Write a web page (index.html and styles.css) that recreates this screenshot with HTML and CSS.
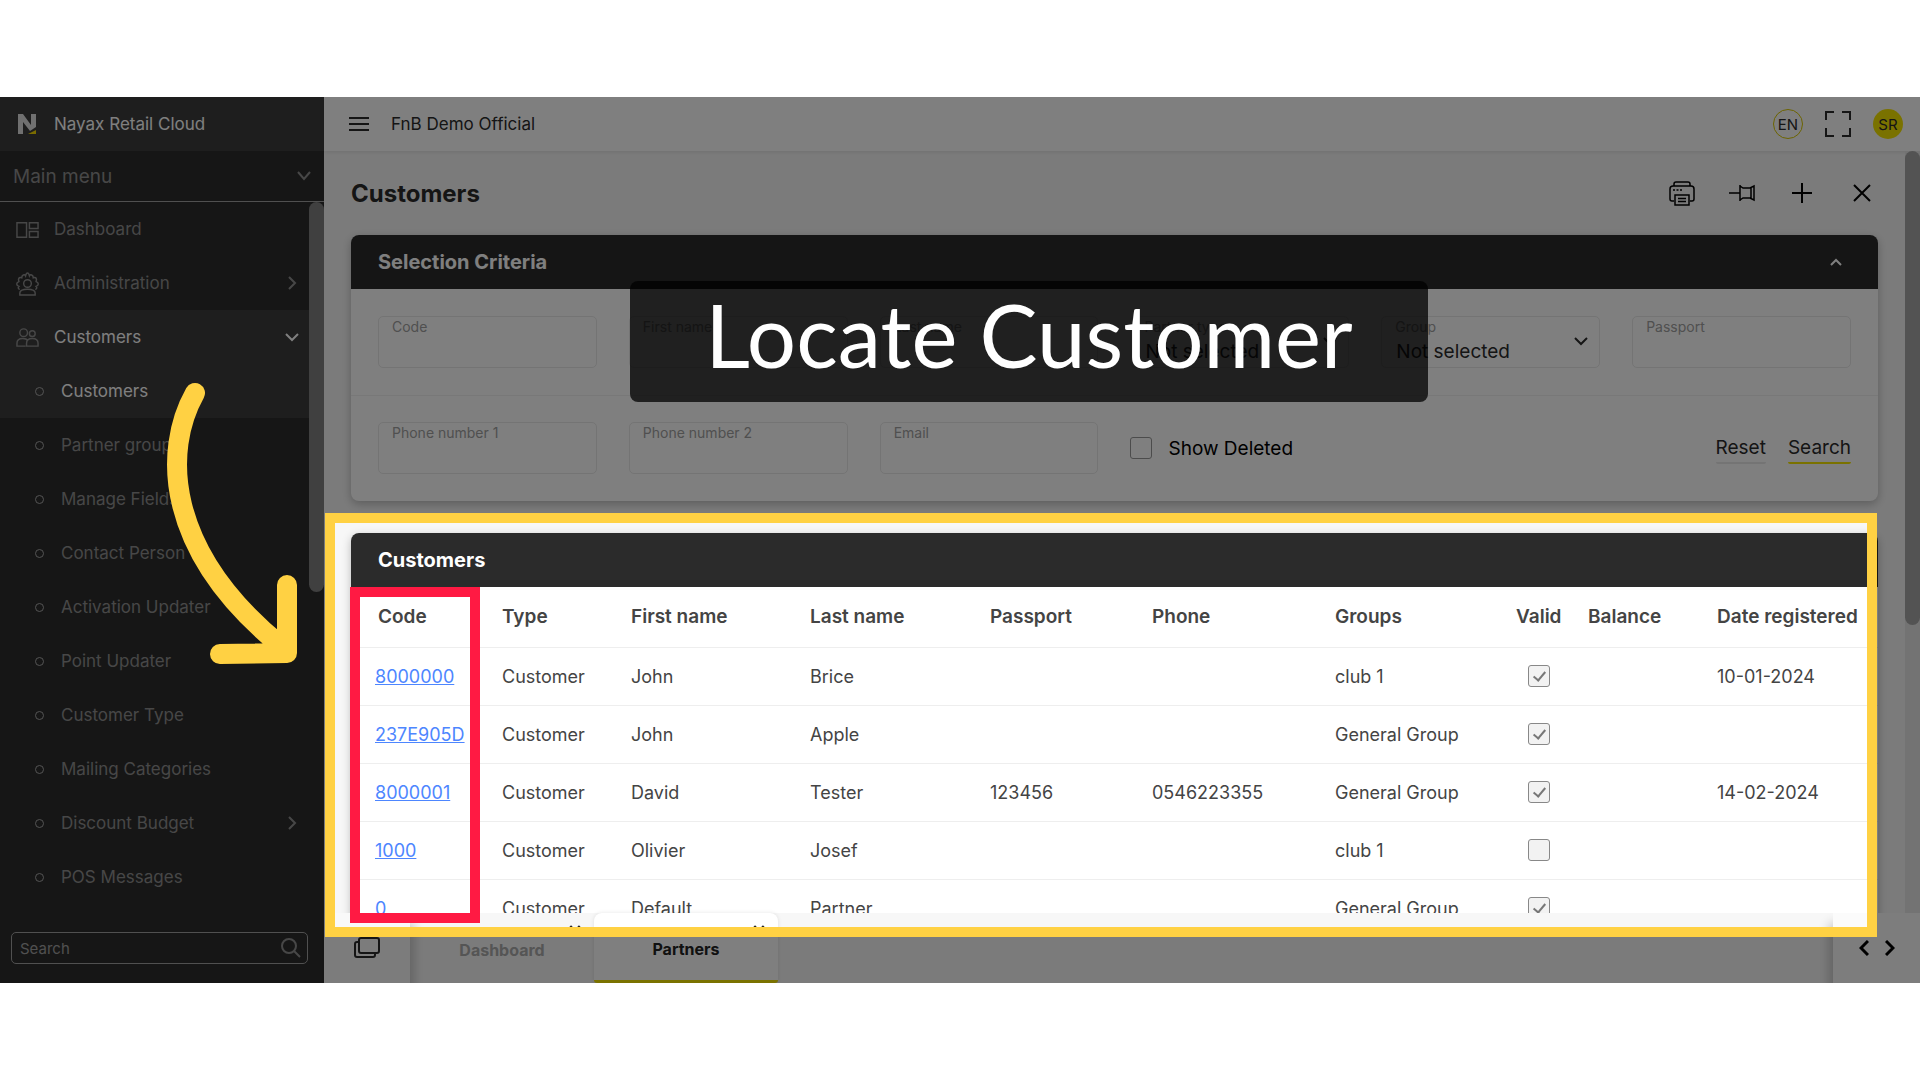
FILE: index.html
```html
<!DOCTYPE html>
<html lang="en">
<head>
    <meta charset="UTF-8">
    <meta name="viewport" content="width=device-width, initial-scale=1.0">
    <title>Customers - Nayax Retail Cloud</title>
    <link rel="stylesheet" href="styles.css">
</head>
<body>
    <div class="app">
        <!-- Sidebar -->
        <aside class="sidebar">
            <div class="brand">
                <svg class="brand-logo" viewBox="0 0 18 20"><path fill="#e0e0e0" d="M0 0h5l8 11V0h5v13l-6 4L5 8v12H0z"/><path fill="#f5d800" d="M10 20l8-4v4z"/></svg>
                <span>Nayax Retail Cloud</span>
            </div>
            <button class="menu-title" type="button">
                Main menu
                <svg class="chevron" viewBox="0 0 14 14"><path d="M1 3l6 7 6-7"/></svg>
            </button>
            <div class="menu-area">
                <nav class="menu">
                    <a href="#" class="item">
                        <svg class="item-icon" viewBox="0 0 24 24"><path d="M1 5h10v15H1zM14 5h9v6h-9zM14 14h9v6h-9z"/></svg>
                        Dashboard
                    </a>
                    <a href="#" class="item">
                        <svg class="item-icon" viewBox="0 0 24 24"><circle cx="12" cy="12" r="4"/><path d="M4 24v-2c0-3 4-4 8-4s8 1 8 4v2zM4 18c-2 0-2-2-1-3-3-1-3-4 0-5-1-3 0-5 3-4 0-3 3-4 4-2 1-4 3-4 4 0 1-2 4-1 4 2 3-1 4 1 3 4 3 1 3 4 0 5 1 1 1 3-1 3"/></svg>
                        Administration
                        <svg class="chevron" viewBox="0 0 14 14"><path d="M4 1l6 6-6 6"/></svg>
                    </a>
                    <a href="#" class="item active">
                        <svg class="item-icon" viewBox="0 0 24 24"><circle cx="8" cy="7" r="4"/><circle cx="17" cy="8" r="3"/><path d="M10 21H1v-3c0-3 2-5 6-5 2 0 4 0 5 2M11 21h12v-3c0-3-2-5-6-5s-6 2-6 5z"/></svg>
                        Customers
                        <svg class="chevron" viewBox="0 0 14 14"><path d="M1 4l6 6 6-6"/></svg>
                    </a>
                    <a href="#" class="item sub active">Customers</a>
                    <a href="#" class="item sub">Partner groups</a>
                    <a href="#" class="item sub">Manage Fields</a>
                    <a href="#" class="item sub">Contact Person</a>
                    <a href="#" class="item sub">Activation Updater</a>
                    <a href="#" class="item sub">Point Updater</a>
                    <a href="#" class="item sub">Customer Type</a>
                    <a href="#" class="item sub">Mailing Categories</a>
                    <a href="#" class="item sub">Discount Budget
                        <svg class="chevron" viewBox="0 0 14 14"><path d="M4 1l6 6-6 6"/></svg>
                    </a>
                    <a href="#" class="item sub">POS Messages</a>
                </nav>
                <div class="menu-scroll"></div>
            </div>
            <div class="menu-search">
                <label class="search-box">
                    <input type="text" placeholder="Search" aria-label="Search menu">
                    <svg viewBox="0 0 20 20"><circle cx="8" cy="8" r="7"/><path d="M13 13l6 6"/></svg>
                </label>
            </div>
        </aside>

        <div class="main">
            <!-- Top bar -->
            <header class="topbar">
                <button type="button" class="icon-button" aria-label="Toggle menu">
                    <svg class="hamburger" viewBox="0 0 20 16"><path d="M0 2h20M0 8h20M0 14h20"/></svg>
                </button>
                <span class="company">FnB Demo Official</span>
                <button type="button" class="round lang">EN</button>
                <button type="button" class="icon-button" aria-label="Full screen">
                    <svg class="fullscreen" viewBox="0 0 26 26"><path d="M1 9V1h8M17 1h8v8M25 17v8h-8M9 25H1v-8"/></svg>
                </button>
                <button type="button" class="round user">SR</button>
            </header>

            <div class="view">
                <div class="content">
                    <div class="page-head">
                        <h1>Customers</h1>
                        <div class="tools">
                            <button type="button" class="icon-button" aria-label="Print">
                                <svg viewBox="0 0 26 26"><path d="M5 6V4q0-2 2-2h12q2 0 2 2v2M5 21H3q-2 0-2-2V9q0-3 3-3h18q3 0 3 3v10q0 2-2 2h-2M6 25V15h14v10zM9 18.500h8M9 21.500h8M4 10h2M7.500 10h2M11 10h2"/></svg>
                            </button>
                            <button type="button" class="icon-button" aria-label="Pin">
                                <svg viewBox="0 0 26 26"><path d="M0 13h11M11 5v16M11 6l3 2h7l4-2v14l-4-2h-7l-3 2M22 8v10"/></svg>
                            </button>
                            <button type="button" class="icon-button" aria-label="Add">
                                <svg class="thick" viewBox="0 0 26 26"><path d="M13 3v20M3 13h20"/></svg>
                            </button>
                            <button type="button" class="icon-button" aria-label="Close">
                                <svg class="thick" viewBox="0 0 26 26"><path d="M5 5l16 16M21 5L5 21"/></svg>
                            </button>
                        </div>
                    </div>

                    <!-- Filter form -->
                    <section class="card">
                        <h2 class="card-head">Selection Criteria
                            <svg class="chevron" viewBox="0 0 14 14"><path d="M2 10l5-5 5 5"/></svg>
                        </h2>
                        <form>
                            <div class="filters">
                                <div class="field"><label for="code">Code</label><input id="code" type="text"></div>
                                <div class="field"><label for="firstName">First name</label><input id="firstName" type="text"></div>
                                <div class="field"><label for="lastName">Last name</label><input id="lastName" type="text"></div>
                                <div class="field">
                                    <label for="partnerType">Partner type</label>
                                    <select id="partnerType"><option>Not selected</option></select>
                                    <svg class="chevron" viewBox="0 0 14 14"><path d="M1 4l6 6 6-6"/></svg>
                                </div>
                                <div class="field">
                                    <label for="group">Group</label>
                                    <select id="group"><option>Not selected</option></select>
                                    <svg class="chevron" viewBox="0 0 14 14"><path d="M1 4l6 6 6-6"/></svg>
                                </div>
                                <div class="field"><label for="passport">Passport</label><input id="passport" type="text"></div>
                            </div>
                            <div class="filters">
                                <div class="field"><label for="phone1">Phone number 1</label><input id="phone1" type="text"></div>
                                <div class="field"><label for="phone2">Phone number 2</label><input id="phone2" type="text"></div>
                                <div class="field"><label for="email">Email</label><input id="email" type="text"></div>
                                <label class="show-deleted"><input type="checkbox"> Show Deleted</label>
                                <div class="form-actions">
                                    <button type="reset">Reset</button>
                                    <button type="button" class="primary">Search</button>
                                </div>
                            </div>
                        </form>
                    </section>

                    <!-- Customer list -->
                    <section class="card">
                        <h2 class="card-head">Customers</h2>
                        <table>
                            <thead>
                                <tr>
                                    <th class="col-code">Code</th>
                                    <th class="col-type">Type</th>
                                    <th class="col-first">First name</th>
                                    <th class="col-last">Last name</th>
                                    <th class="col-passport">Passport</th>
                                    <th class="col-phone">Phone</th>
                                    <th class="col-groups">Groups</th>
                                    <th class="col-valid">Valid</th>
                                    <th class="col-balance">Balance</th>
                                    <th>Date registered</th>
                                </tr>
                            </thead>
                            <tbody>
                                <tr>
                                    <td><a href="#">8000000</a></td><td>Customer</td><td>John</td><td>Brice</td><td></td><td></td><td>club 1</td>
                                    <td class="valid"><input type="checkbox" aria-label="Valid" checked disabled></td><td></td><td>10-01-2024</td>
                                </tr>
                                <tr>
                                    <td><a href="#">237E905D</a></td><td>Customer</td><td>John</td><td>Apple</td><td></td><td></td><td>General Group</td>
                                    <td class="valid"><input type="checkbox" aria-label="Valid" checked disabled></td><td></td><td></td>
                                </tr>
                                <tr>
                                    <td><a href="#">8000001</a></td><td>Customer</td><td>David</td><td>Tester</td><td>123456</td><td>0546223355</td><td>General Group</td>
                                    <td class="valid"><input type="checkbox" aria-label="Valid" checked disabled></td><td></td><td>14-02-2024</td>
                                </tr>
                                <tr>
                                    <td><a href="#">1000</a></td><td>Customer</td><td>Olivier</td><td>Josef</td><td></td><td></td><td>club 1</td>
                                    <td class="valid"><input type="checkbox" aria-label="Valid" disabled></td><td></td><td></td>
                                </tr>
                                <tr>
                                    <td><a href="#">0</a></td><td>Customer</td><td>Default</td><td>Partner</td><td></td><td></td><td>General Group</td>
                                    <td class="valid"><input type="checkbox" aria-label="Valid" checked disabled></td><td></td><td></td>
                                </tr>
                            </tbody>
                        </table>
                    </section>
                </div>
                <div class="view-scroll"><div class="thumb"></div></div>
            </div>

            <!-- Open windows -->
            <footer class="tabs">
                <button type="button" class="windows" aria-label="Windows">
                    <svg viewBox="0 0 26 22"><rect x="5" y="1" width="20" height="15" rx="2"/><path d="M5 5H3q-2 0-2 2v11q0 2 2 2h16q2 0 2-2v-2"/></svg>
                </button>
                <a href="#" class="tab">Dashboard
                    <svg class="close" viewBox="0 0 10 10"><path d="M1 1l8 8M9 1L1 9"/></svg>
                </a>
                <a href="#" class="tab current">Partners
                    <svg class="close" viewBox="0 0 10 10"><path d="M1 1l8 8M9 1L1 9"/></svg>
                </a>
                <div class="pager">
                    <button type="button" class="icon-button" aria-label="Previous"><svg viewBox="0 0 10 16"><path d="M9 1L2 8l7 7"/></svg></button>
                    <button type="button" class="icon-button" aria-label="Next"><svg viewBox="0 0 10 16"><path d="M1 1l7 7-7 7"/></svg></button>
                </div>
            </footer>
        </div>

        <!-- Tutorial step drawn over the page -->
        <div class="spotlight"></div>
        <div class="marker"></div>
        <svg class="arrow" viewBox="0 0 132 284"><path d="M30 13C-2 70-1 170 115 265M122 205v68l-67 1"/></svg>
        <div class="step-title">Locate Customer</div>
    </div>
</body>
</html>
```
FILE: styles.css
```css
* {
    box-sizing: border-box;
}

body {
    margin: 0;
    padding: 97px 0;
    height: 100vh;
    background: #fff;
    font-family: Inter, "Liberation Sans", sans-serif;
    font-size: 18px;
    color: #2b2b2b;
}

button,
input,
select {
    font: inherit;
    color: inherit;
}

button {
    padding: 0;
    border: 0;
    background: none;
    cursor: pointer;
}

svg {
    display: block;
    fill: none;
    stroke: currentColor;
    stroke-width: 2;
}

.app {
    position: relative;
    display: flex;
    height: 100%;
    overflow: hidden;
}

/* Sidebar */
.sidebar {
    display: flex;
    flex-direction: column;
    width: 324px;
    background: #2d2d2d;
    color: #8f8f8f;
    font-size: 17px;
}

.brand {
    display: flex;
    align-items: center;
    gap: 18px;
    height: 54px;
    padding-left: 18px;
    background: #3c3c3c;
    color: #fff;
}

.brand-logo {
    width: 18px;
    height: 20px;
    stroke: none;
}

.chevron {
    width: 14px;
    height: 14px;
    margin-left: auto;
}

.menu-title {
    display: flex;
    align-items: center;
    height: 51px;
    padding: 0 13px;
    border-bottom: 1px solid #a0a0a0;
    font-size: 19px;
}

.menu-area {
    display: flex;
    flex: 1;
    min-height: 0;
    overflow: hidden;
}

.menu {
    flex: 1;
}

.menu-scroll {
    width: 15px;
    height: 390px;
    border-radius: 8px;
    background: #808080;
}

.item {
    display: flex;
    align-items: center;
    height: 54px;
    padding: 0 10px 0 16px;
    color: inherit;
    text-decoration: none;
}

.item.active {
    background: #3c3c3c;
    color: #fff;
}

.item-icon {
    width: 23px;
    height: 23px;
    margin-right: 15px;
    color: #8f8f8f;
    stroke-width: 1.500;
    overflow: visible;
}

.item.sub {
    padding-left: 35px;
}

.item.sub::before {
    content: "";
    width: 7px;
    height: 7px;
    margin-right: 17px;
    border: 1px solid #a8a8a8;
    border-radius: 50%;
}

.menu-search {
    padding: 18px 16px 19px 11px;
}

.search-box {
    display: flex;
    align-items: center;
    height: 32px;
    padding: 0 6px 0 8px;
    border: 1px solid #a0a0a0;
    border-radius: 5px;
}

.search-box input {
    flex: 1;
    min-width: 0;
    border: 0;
    background: none;
    font-size: 15px;
    padding: 0;
}

.search-box input::placeholder {
    color: #a0a0a0;
}

.search-box svg {
    width: 20px;
    height: 20px;
}

/* Right side */
.main {
    display: flex;
    flex: 1;
    flex-direction: column;
    min-width: 0;
    background: #f7f7f7;
}

.topbar {
    display: flex;
    align-items: center;
    gap: 22px;
    height: 54px;
    padding: 0 17px 0 25px;
    background: #fff;
    box-shadow: 0 1px 4px rgba(0, 0, 0, 0.1);
    font-size: 17px;
}

.hamburger {
    width: 20px;
    height: 16px;
}

.company {
    margin-right: auto;
}

.round {
    width: 30px;
    height: 30px;
    border-radius: 50%;
    font-size: 15px;
}

.lang {
    border: 1px solid #d8c800;
}

.user {
    background: #f5e400;
}

.fullscreen {
    width: 26px;
    height: 26px;
}

.view {
    display: flex;
    flex: 1;
    min-height: 0;
}

.content {
    flex: 1;
    min-width: 0;
    overflow: hidden;
    padding: 0 27px;
}

.page-head {
    display: flex;
    align-items: center;
    justify-content: space-between;
    height: 84px;
}

h1 {
    margin: 0;
    font-size: 24px;
    font-weight: 700;
}

.tools {
    display: flex;
    gap: 34px;
    padding-right: 3px;
    color: #000;
}

.tools svg {
    width: 26px;
    height: 26px;
    stroke-width: 1.500;
}

.tools .thick {
    stroke-width: 2;
}

.view-scroll {
    width: 15px;
    background: #e6e6e6;
}

.view-scroll .thumb {
    height: 474px;
    border-radius: 8px;
    background: #a6a6a6;
}

/* Cards */
.card {
    margin-bottom: 32px;
    border-radius: 8px;
    background: #fff;
    box-shadow: 0 3px 10px rgba(0, 0, 0, 0.25);
}

.card-head {
    display: flex;
    align-items: center;
    height: 54px;
    margin: 0;
    padding: 0 35px 0 27px;
    border-radius: 8px 8px 0 0;
    background: #2b2b2b;
    color: #fff;
    font-size: 20px;
    font-weight: 700;
}

.filters {
    display: grid;
    grid-template-columns: repeat(6, 1fr);
    gap: 32px;
    padding: 27px;
}

.filters + .filters {
    border-top: 1px solid #f0f0f0;
    padding-top: 26px;
}

.field {
    position: relative;
    height: 52px;
    font-size: 19px;
}

.field label {
    position: absolute;
    top: 2px;
    left: 14px;
    color: #a0a0a0;
    font-size: 14px;
}

.field input,
.field select {
    appearance: none;
    width: 100%;
    height: 100%;
    padding: 18px 14px 0;
    border: 1px solid #e8e8e8;
    border-radius: 5px;
    background: transparent;
    outline: none;
}

.field .chevron {
    position: absolute;
    top: 18px;
    right: 12px;
}

.show-deleted {
    display: flex;
    align-items: center;
    gap: 16px;
    color: #000;
    font-size: 19px;
    white-space: nowrap;
}

input[type="checkbox"] {
    appearance: none;
    width: 22px;
    height: 22px;
    margin: 0;
    border: 1px solid #999;
    border-radius: 3px;
}

.form-actions {
    display: flex;
    grid-column: 5 / 7;
    align-items: center;
    justify-content: flex-end;
    gap: 22px;
    font-size: 19px;
}

.form-actions button {
    height: 32px;
    border-bottom: 2px solid #e8e8e8;
    border-radius: 2px;
}

.form-actions .primary {
    border-bottom-color: #f5e400;
}

/* Table */
table {
    width: 100%;
    table-layout: fixed;
    border-collapse: collapse;
    color: #444;
}

th,
td {
    height: 58px;
    padding: 0 0 0 27px;
    border-bottom: 1px solid #eee;
    text-align: left;
    font-weight: 400;
    white-space: nowrap;
}

th {
    height: 60px;
    font-size: 19px;
    font-weight: 600;
}

td:first-child {
    padding-left: 24px;
}

td a {
    color: #4d86ff;
}

td.valid {
    text-align: center;
}

td input[type="checkbox"] {
    display: block;
    margin: auto;
    border-color: #888;
    background: #f2f2f2;
}

td input[type="checkbox"]:checked::before {
    content: "";
    display: block;
    width: 5px;
    height: 10px;
    margin: 3px 7px;
    border: solid #777;
    border-width: 0 2px 2px 0;
    transform: rotate(40deg);
}

.col-code { width: 124px; }
.col-type { width: 129px; }
.col-first { width: 179px; }
.col-last { width: 180px; }
.col-passport { width: 162px; }
.col-phone { width: 183px; }
.col-groups { width: 181px; }
.col-valid { width: 72px; }
.col-balance { width: 129px; }

/* Bottom tabs */
.tabs {
    display: flex;
    height: 70px;
    background: #f7f7f7;
    font-size: 16px;
    font-weight: 700;
}

.windows {
    width: 86px;
    padding-left: 30px;
    background: #f9f9f9;
    box-shadow: 4px 10px 10px rgba(0, 0, 0, 0.2);
    z-index: 1;
}

.windows svg {
    width: 26px;
    height: 22px;
}

.tab {
    position: relative;
    display: flex;
    align-items: center;
    justify-content: center;
    width: 184px;
    padding-top: 4px;
    color: #aaa;
    text-decoration: none;
}

.tab.current {
    border-bottom: 3px solid #f5e400;
    border-radius: 8px 8px 3px 3px;
    background: #fff;
    box-shadow: 0 0 4px rgba(0, 0, 0, 0.1);
    color: #222;
}

.close {
    position: absolute;
    top: 12px;
    right: 13px;
    width: 12px;
    height: 12px;
    color: #222;
}

.pager {
    display: flex;
    align-items: center;
    justify-content: center;
    gap: 16px;
    width: 87px;
    margin-left: auto;
    background: #fbfbfb;
    box-shadow: -4px 10px 10px rgba(0, 0, 0, 0.2);
    color: #000;
}

.pager svg {
    width: 10px;
    height: 16px;
    stroke-width: 3;
}

/* Tutorial overlay: everything outside the frame is dimmed */
.spotlight {
    position: absolute;
    z-index: 2;
    top: 416px;
    right: 43px;
    bottom: 46px;
    left: 325px;
    border: 10px solid #ffd143;
    box-shadow: 0 0 0 2000px rgba(0, 0, 0, 0.5);
}

.marker {
    position: absolute;
    z-index: 2;
    top: 490px;
    left: 350px;
    width: 130px;
    height: 336px;
    border: 10px solid #ff1a43;
}

.arrow {
    position: absolute;
    z-index: 2;
    top: 283px;
    left: 165px;
    width: 132px;
    height: 284px;
    color: #ffd143;
    stroke-width: 20;
    stroke-linecap: round;
    stroke-linejoin: round;
}

.step-title {
    position: absolute;
    z-index: 2;
    top: 184px;
    left: 630px;
    width: 798px;
    height: 121px;
    border-radius: 8px;
    background: rgba(0, 0, 0, 0.75);
    color: #fff;
    font-family: Lato, sans-serif;
    font-size: 87px;
    line-height: 108px;
    text-align: center;
}
```
